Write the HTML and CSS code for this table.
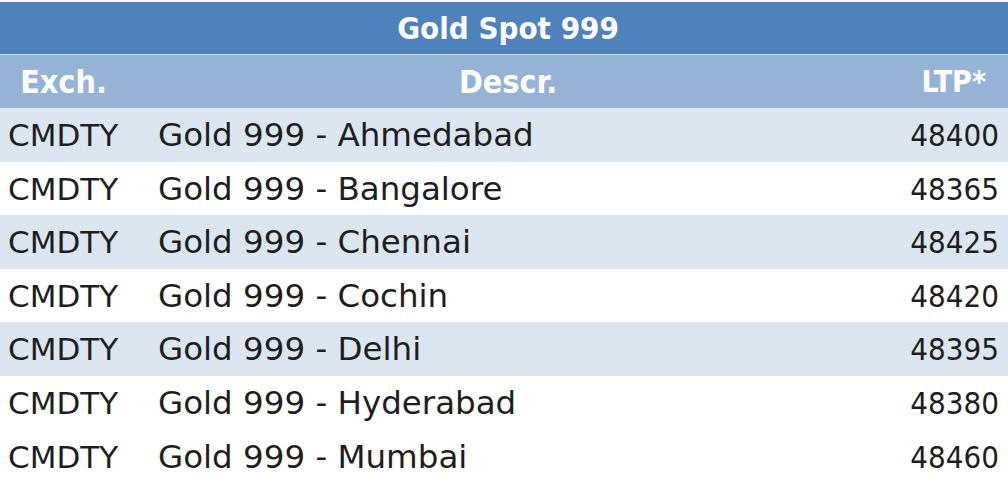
FILE: index.html
```html
<!DOCTYPE html>
<html>
<head>
<meta charset="utf-8">
<link rel="stylesheet" href="styles.css">
</head>
<body>
<div class="sheet">
  <div class="title">Gold Spot 999</div>
  <div class="row head">
    <div class="c1">Exch.</div>
    <div class="c2">Descr.</div>
    <div class="c3">LTP*</div>
  </div>
  <div class="row alt h54"><div class="c1">CMDTY</div><div class="c2">Gold 999 - Ahmedabad</div><div class="c3">48400</div></div>
  <div class="row h53"><div class="c1">CMDTY</div><div class="c2">Gold 999 - Bangalore</div><div class="c3">48365</div></div>
  <div class="row alt h54"><div class="c1">CMDTY</div><div class="c2">Gold 999 - Chennai</div><div class="c3">48425</div></div>
  <div class="row h53"><div class="c1">CMDTY</div><div class="c2">Gold 999 - Cochin</div><div class="c3">48420</div></div>
  <div class="row alt h54"><div class="c1">CMDTY</div><div class="c2">Gold 999 - Delhi</div><div class="c3">48395</div></div>
  <div class="row h54"><div class="c1">CMDTY</div><div class="c2">Gold 999 - Hyderabad</div><div class="c3">48380</div></div>
  <div class="row h54"><div class="c1">CMDTY</div><div class="c2">Gold 999 - Mumbai</div><div class="c3">48460</div></div>
</div>
</body>
</html>
```
FILE: styles.css
```css
html, body {
  margin: 0;
  padding: 0;
  background: #ffffff;
}
.sheet {
  width: 1008px;
  height: 478px;
  overflow: hidden;
  padding-top: 2px;
  box-sizing: border-box;
  background: #ffffff;
  font-family: "DejaVu Sans", sans-serif;
}
.title {
  height: 52px;
  background: #4f81bd;
  color: #ffffff;
  font-family: "DejaVu Sans Condensed", "DejaVu Sans", sans-serif;
  font-stretch: condensed;
  font-weight: bold;
  font-size: 31px;
  display: flex;
  align-items: center;
  justify-content: center;
  padding-left: 8px;
  border-bottom: 1px solid #c5d6ea;
}
.row {
  display: grid;
  grid-template-columns: 150px 1fr 160px;
  align-items: center;
  color: #1e1e1e;
}
.row .c1 { padding-left: 8px; font-size: 31px; }
.row .c2 { padding-left: 8px; font-size: 32.5px; }
.row .c3 {
  text-align: right;
  padding-right: 9px;
  font-size: 31px;
  font-family: "DejaVu Sans Condensed", "DejaVu Sans", sans-serif;
  font-stretch: condensed;
}
.head {
  height: 53px;
  background: #95b3d7;
  color: #ffffff;
  font-family: "DejaVu Sans Condensed", "DejaVu Sans", sans-serif;
  font-stretch: condensed;
  font-weight: bold;
  grid-template-columns: 127px 1fr 127px;
}
.head .c1 { padding-left: 0; text-align: center; font-size: 32px; }
.head .c2 { padding-left: 8px; text-align: center; font-size: 32px; }
.head .c3 { padding-right: 22px; font-size: 30px; font-weight: bold; }
.alt { background: #dce6f1; }
.h54 { height: 54px; }
.h53 { height: 53px; }
```
